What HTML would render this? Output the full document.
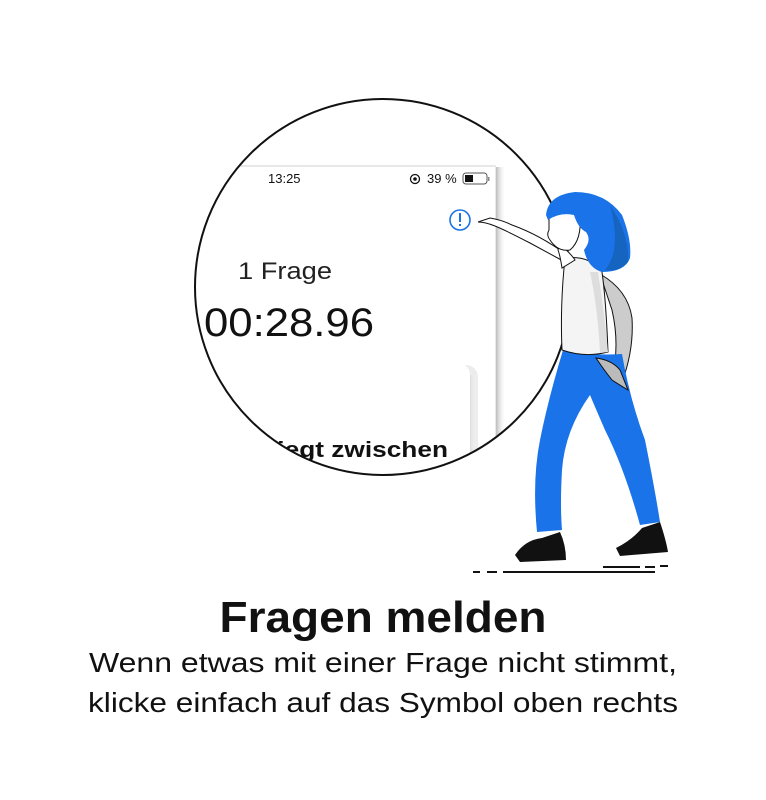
<!DOCTYPE html>
<html><head><meta charset="utf-8"><style>
html,body{margin:0;padding:0;background:#fff;width:766px;height:800px;overflow:hidden}
</style></head><body>
<svg width="766" height="800" viewBox="0 0 766 800" xmlns="http://www.w3.org/2000/svg" font-family="Liberation Sans, sans-serif">
<defs>
<clipPath id="c"><circle cx="383" cy="287" r="188"/></clipPath>
<linearGradient id="sh" x1="0" x2="1"><stop offset="0" stop-color="#bbb"/><stop offset="1" stop-color="#fff" stop-opacity="0"/></linearGradient>
<linearGradient id="csh" x1="0" x2="1"><stop offset="0" stop-color="#ddd"/><stop offset="1" stop-color="#fff" stop-opacity="0"/></linearGradient>
</defs>
<g clip-path="url(#c)">
<rect x="190" y="95" width="400" height="400" fill="#fff"/>
<rect x="150" y="165" width="346" height="330" fill="#e8e8e8"/>
<rect x="496" y="167" width="10" height="330" fill="url(#sh)"/>
<rect x="150" y="167" width="345" height="330" fill="#fff"/>
<text x="268" y="183" font-size="13" fill="#111">13:25</text>
<circle cx="415" cy="179" r="4.5" fill="none" stroke="#111" stroke-width="1.3"/><circle cx="415" cy="179" r="1.8" fill="#111"/>
<text x="427" y="183" font-size="13" fill="#111">39 %</text>
<rect x="463" y="173" width="24" height="11" rx="3" fill="none" stroke="#555" stroke-width="1"/>
<rect x="465" y="175" width="8" height="7" fill="#111"/>
<rect x="488" y="177" width="1.5" height="4" fill="#888"/>
<circle cx="460" cy="220" r="10" fill="none" stroke="#1a73e8" stroke-width="1.6"/>
<rect x="459" y="213" width="2" height="9" fill="#1a73e8"/><rect x="459" y="224" width="2" height="2" fill="#1a73e8"/>
<text x="238" y="279" font-size="24" fill="#222" textLength="94" lengthAdjust="spacingAndGlyphs">1 Frage</text>
<text x="204" y="336" font-size="40" fill="#111" textLength="170" lengthAdjust="spacingAndGlyphs">00:28.96</text>
<rect x="200" y="365" width="278" height="150" rx="12" fill="#ececec"/>
<rect x="200" y="363" width="270" height="150" rx="12" fill="#fff"/>
<rect x="470" y="375" width="8" height="130" fill="url(#csh)"/>
<text x="270" y="457" font-size="22" font-weight="bold" fill="#111" textLength="178" lengthAdjust="spacingAndGlyphs">liegt zwischen</text>
<text x="300" y="486" font-size="22" font-weight="bold" fill="#111">ike?</text>
</g>
<circle cx="383" cy="287" r="188" fill="none" stroke="#111" stroke-width="2"/>
<path d="M600 274 Q628 290 632 318 Q634 350 622 382 L612 378 Q620 345 612 310 Z" fill="#ccc" stroke="#111" stroke-width="1"/>
<path d="M563 350 Q590 356 622 354 Q630 400 645 440 Q655 490 660 522 L640 525 Q625 470 605 430 Q592 400 590 395 Q565 430 562 470 Q560 505 562 530 L537 532 Q532 480 540 440 Q548 400 563 350 Z" fill="#1a73e8"/>
<path d="M565 258 Q590 255 602 272 Q606 300 608 352 Q585 358 562 350 Q560 305 565 258 Z" fill="#f4f4f4" stroke="#111" stroke-width="1"/>
<path d="M598 272 Q604 310 608 352 L600 353 Q598 310 590 272 Z" fill="#ddd"/>
<path d="M596 358 Q612 360 620 370 L628 390 Q618 384 612 380 Q604 370 596 358 Z" fill="#bbb" stroke="#111" stroke-width="1"/>
<path d="M565 262 L530 243 Q505 230 495 226 Q485 222 478 222 L490 218 Q502 220 512 225 Q540 235 567 255 Z" fill="#fff" stroke="#111" stroke-width="1"/>
<path d="M560 244 Q572 255 575 260 L562 268 Q560 255 558 250 Z" fill="#fff" stroke="#111" stroke-width="1"/>
<path d="M549 218 Q552 205 560 202 Q575 200 580 215 Q582 240 570 250 Q558 252 550 240 Q546 235 549 230 Z" fill="#fff" stroke="#111" stroke-width="1"/>
<path d="M546 215 Q548 195 575 192 Q605 192 622 215 Q632 240 630 258 Q625 272 602 272 Q588 268 584 250 Q592 240 586 232 Q578 228 574 215 Q560 212 548 220 Z" fill="#1a73e8"/>
<path d="M610 205 Q630 235 628 262 Q620 272 605 270 Q622 250 610 205 Z" fill="#1565c0"/>
<path d="M515 555 Q525 540 542 538 L560 532 Q566 545 566 560 L520 562 Z" fill="#111"/>
<path d="M616 548 Q632 540 642 528 L660 522 Q666 540 668 552 L620 556 Z" fill="#111"/>
<g stroke="#111" stroke-width="2"><line x1="473" y1="572" x2="480" y2="572"/><line x1="487" y1="572" x2="497" y2="572"/><line x1="503" y1="572" x2="655" y2="572"/><line x1="603" y1="567" x2="640" y2="567"/><line x1="645" y1="567" x2="655" y2="567"/><line x1="660" y1="566" x2="668" y2="566"/></g>
<text x="383" y="632" font-size="44" font-weight="bold" fill="#111" text-anchor="middle" textLength="327" lengthAdjust="spacingAndGlyphs">Fragen melden</text>
<text x="383" y="672" font-size="28" fill="#111" text-anchor="middle" textLength="588" lengthAdjust="spacingAndGlyphs">Wenn etwas mit einer Frage nicht stimmt,</text>
<text x="383" y="712" font-size="28" fill="#111" text-anchor="middle" textLength="590" lengthAdjust="spacingAndGlyphs">klicke einfach auf das Symbol oben rechts</text>
</svg>
</body></html>
